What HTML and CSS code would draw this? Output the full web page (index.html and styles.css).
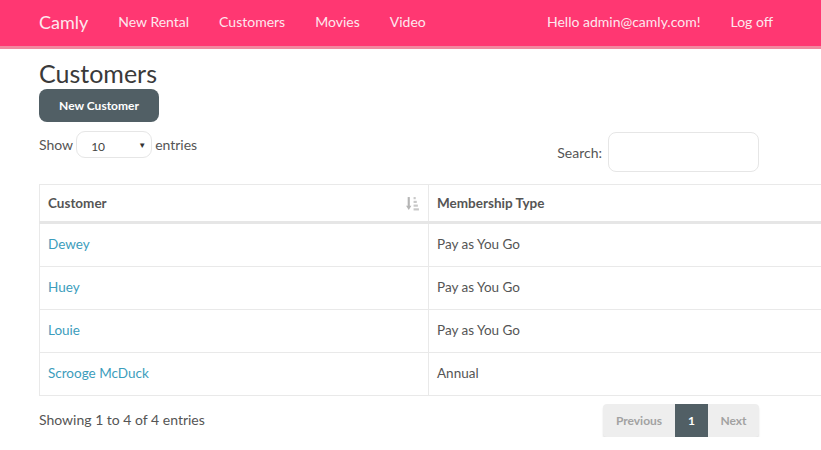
FILE: index.html
```html
<!DOCTYPE html>
<html>
<head>
<meta charset="utf-8">
<link rel="stylesheet" href="styles.css">
</head>
<body>
<nav class="navbar">
  <div class="nav-left">
    <a class="brand">Camly</a>
    <a class="nav-link">New Rental</a>
    <a class="nav-link">Customers</a>
    <a class="nav-link">Movies</a>
    <a class="nav-link">Video</a>
  </div>
  <div class="nav-right">
    <a class="nav-link">Hello admin@camly.com!</a>
    <a class="nav-link">Log off</a>
  </div>
</nav>
<main class="container">
  <h1 class="title">Customers</h1>
  <button class="btn-primary">New Customer</button>
  <div class="controls">
    <div class="length">
      <span>Show</span>
      <span class="select"><span class="select-val">10</span><span class="caret">&#9660;</span></span>
      <span>entries</span>
    </div>
    <div class="filter">
      <span>Search:</span>
      <span class="search-input"></span>
    </div>
  </div>
  <div class="table-wrap">
    <table class="table">
      <thead>
        <tr>
          <th class="col-name"><div class="th-inner"><span>Customer</span>
            <svg class="sort-icon" width="13" height="15" viewBox="0 0 12 14">
              <rect x="1.5" y="1" width="2" height="9" fill="#b5b5b5"/>
              <polygon points="0,9 5,9 2.5,13" fill="#b5b5b5"/>
              <rect x="7" y="1" width="2" height="2" fill="#c8c8c8"/>
              <rect x="7" y="4.5" width="3" height="2" fill="#c8c8c8"/>
              <rect x="7" y="8" width="4" height="2" fill="#c8c8c8"/>
              <rect x="7" y="11.5" width="5" height="2" fill="#c8c8c8"/>
            </svg></div>
          </th>
          <th>Membership Type</th>
        </tr>
      </thead>
      <tbody>
        <tr><td><a class="link">Dewey</a></td><td>Pay as You Go</td></tr>
        <tr><td><a class="link">Huey</a></td><td>Pay as You Go</td></tr>
        <tr><td><a class="link">Louie</a></td><td>Pay as You Go</td></tr>
        <tr><td><a class="link">Scrooge McDuck</a></td><td>Annual</td></tr>
      </tbody>
    </table>
  </div>
  <div class="footer-row">
    <div class="info">Showing 1 to 4 of 4 entries</div>
    <div class="pagination">
      <span class="page prev">Previous</span>
      <span class="page current">1</span>
      <span class="page next">Next</span>
    </div>
  </div>
</main>
</body>
</html>
```
FILE: styles.css
```css
html, body {
  margin: 0;
  padding: 0;
  overflow: hidden;
  background: #fff;
}
body {
  font-family: Lato, "Open Sans", sans-serif;
  font-size: 14px;
  color: #555;
}
.navbar {
  display: flex;
  justify-content: space-between;
  align-items: flex-start;
  height: 46px;
  background: #ff3772;
  border-bottom: 3px solid #f2879f;
  padding: 0 33px 0 24px;
}
.nav-left, .nav-right {
  display: flex;
  align-items: flex-start;
}
.brand {
  color: #fde8ee;
  font-size: 18px;
  padding: 0 15px;
  line-height: 44px;
}
.nav-link {
  color: #fde8ee;
  font-size: 14px;
  padding: 0 15px;
  line-height: 44px;
}
.container {
  width: 720px;
  margin-left: 39px;
}
.title {
  margin: 9px 0 0;
  font-size: 25px;
  font-weight: 400;
  line-height: 30px;
  color: #3a3a3a;
}
.btn-primary {
  display: block;
  border: none;
  background: #515f65;
  color: #fff;
  font-family: Lato, sans-serif;
  font-weight: 700;
  font-size: 12px;
  line-height: 17px;
  padding: 8px 0;
  width: 120px;
  border-radius: 8px;
  margin-top: 1px;
}
.controls {
  display: flex;
  justify-content: space-between;
  align-items: flex-start;
  margin-top: 10px;
}
.length {
  display: flex;
  align-items: center;
  gap: 3px;
  color: #555;
  margin-top: -1px;
}
.select {
  display: inline-flex;
  align-items: center;
  justify-content: space-between;
  box-sizing: border-box;
  width: 76px;
  height: 27px;
  border: 1px solid #e6e6e6;
  border-radius: 9px;
  padding: 0 5px 0 14px;
  font-size: 12px;
  color: #444;
}
.select-val { padding-top: 3px; }
.caret { font-size: 8px; color: #333; }
.filter {
  display: flex;
  align-items: center;
  gap: 6px;
  color: #555;
}
.search-input {
  display: block;
  box-sizing: border-box;
  width: 151px;
  height: 40px;
  border: 1px solid #e6e6e6;
  border-radius: 8px;
}
.table-wrap {
  margin-top: 12px;
  width: calc(100vw - 39px);
  overflow: hidden;
}
.table {
  width: 900px;
  border-collapse: collapse;
  font-size: 13.5px;
}
.table th, .table td {
  border: 1px solid #e9e9e9;
  text-align: left;
  padding: 0 8px;
}
.table th {
  height: 36px;
  font-weight: 700;
  color: #555;
  border-bottom: 3px solid #e6e6e6;
}
.col-name { width: 372px; }
.th-inner {
  display: flex;
  justify-content: space-between;
  align-items: center;
}
.sort-icon { margin-right: 1px; }
.table td {
  height: 39px;
  padding-bottom: 3px;
  color: #555;
}
.link { color: #3c9dbc; }
.footer-row {
  display: flex;
  justify-content: space-between;
  align-items: center;
  margin-top: 8px;
}
.info { color: #555; margin-top: -2px; }
.pagination {
  display: flex;
  height: 33px;
  border-radius: 4px;
  overflow: hidden;
  box-shadow: 0 2px 2px rgba(0,0,0,0.12);
  background: #eee;
  font-size: 12px;
  font-weight: 700;
}
.page {
  display: flex;
  align-items: center;
  justify-content: center;
  color: #a2a2a2;
}
.prev { width: 72px; }
.current { width: 33px; background: #515f65; color: #fff; }
.next { width: 51px; }
```
